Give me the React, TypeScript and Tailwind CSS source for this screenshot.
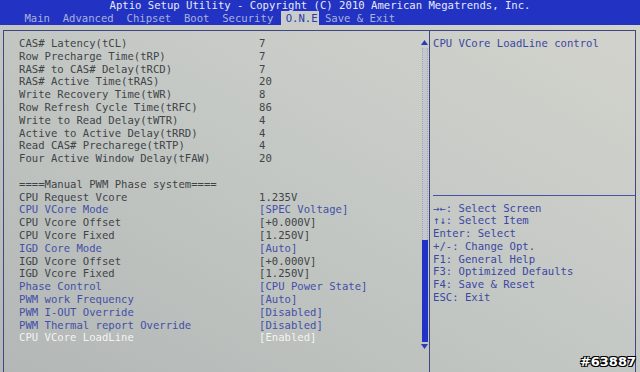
import React from "react"

type Row = { label: string; value?: string; kind?: "plain" | "link" | "active" }

const timings: Row[] = [
    { label: "CAS# Latency(tCL)", value: "7" },
    { label: "Row Precharge Time(tRP)", value: "7" },
    { label: "RAS# to CAS# Delay(tRCD)", value: "7" },
    { label: "RAS# Active Time(tRAS)", value: "20" },
    { label: "Write Recovery Time(tWR)", value: "8" },
    { label: "Row Refresh Cycle Time(tRFC)", value: "86" },
    { label: "Write to Read Delay(tWTR)", value: "4" },
    { label: "Active to Active Delay(tRRD)", value: "4" },
    { label: "Read CAS# Precharege(tRTP)", value: "4" },
    { label: "Four Active Window Delay(tFAW)", value: "20" },
]

const pwm: Row[] = [
    { label: "====Manual PWM Phase system====" },
    { label: "CPU Request Vcore", value: "1.235V" },
    { label: "CPU VCore Mode", value: "[SPEC Voltage]", kind: "link" },
    { label: "CPU Vcore Offset", value: "[+0.000V]" },
    { label: "CPU Vcore Fixed", value: "[1.250V]" },
    { label: "IGD Core Mode", value: "[Auto]", kind: "link" },
    { label: "IGD Vcore Offset", value: "[+0.000V]" },
    { label: "IGD Vcore Fixed", value: "[1.250V]" },
    { label: "Phase Control", value: "[CPU Power State]", kind: "link" },
    { label: "PWM work Frequency", value: "[Auto]", kind: "link" },
    { label: "PWM I-OUT Override", value: "[Disabled]", kind: "link" },
    { label: "PWM Thermal report Override", value: "[Disabled]", kind: "link" },
    { label: "CPU VCore LoadLine", value: "[Enabled]", kind: "active" },
]

const keys = [
    "→←: Select Screen",
    "↑↓: Select Item",
    "Enter: Select",
    "+/-: Change Opt.",
    "F1: General Help",
    "F3: Optimized Defaults",
    "F4: Save & Reset",
    "ESC: Exit",
]

const tabs = ["Main", "Advanced", "Chipset", "Boot", "Security", "O.N.E", "Save & Exit"]

function SetupRow({ row }: { row: Row }) {
    const color =
        row.kind === "link" ? "text-[#4350a8]" : row.kind === "active" ? "text-[#f2f4f4]" : "text-[#404447]"
    return (
        <div className={`flex h-[12.8px] leading-[12.8px] whitespace-pre ${color}`}>
            <span className="w-[240px] shrink-0">{row.label}</span>
            {row.value && <span>{row.value}</span>}
        </div>
    )
}

export default function App() {
    return (
        <div className="relative w-[640px] h-[372px] overflow-hidden bg-linear-to-tr from-[#b3b7b5] via-[#c4c8c5] to-[#d3d4cc] font-['DejaVu_Sans_Mono',monospace] text-[10.6px]">
            {/* top bar */}
            <div className="h-[25px] bg-[#2232c2]">
                <div className="h-[11px] leading-[11px] text-center text-[#e6eaf8] whitespace-pre">
                    Aptio Setup Utility - Copyright (C) 2010 American Megatrends, Inc.
                </div>
                <div className="flex pl-[18px] h-[14px] leading-[14px] whitespace-pre">
                    {tabs.map((t) =>
                        t === "O.N.E" ? (
                            <span key={t} className="ml-[1px] pl-[5px] pr-[1px] bg-[#c8ccca] text-[#2a3aa8]">
                                {t}
                            </span>
                        ) : (
                            <span key={t} className="px-[6.4px] text-[#a9b3dc]">
                                {t}
                            </span>
                        )
                    )}
                </div>
            </div>

            {/* main frame */}
            <div className="mt-[5px] ml-[3px] w-[633px] h-[345px] border border-[#3f4682] flex">
                <div className="flex-1 flex">
                    <div className="flex-1 pl-[15px] pt-[6px]">
                        {timings.map((r) => (
                            <SetupRow key={r.label} row={r} />
                        ))}
                        <div className="h-[12.8px]" />
                        {pwm.map((r) => (
                            <SetupRow key={r.label} row={r} />
                        ))}
                    </div>
                    {/* scrollbar */}
                    <div className="w-[7px] mr-[1px] flex flex-col items-center pt-[9px]">
                        <svg width="7" height="5" viewBox="0 0 7 5" className="text-[#2a3ab8]">
                            <path d="M3.5 0L7 5H0z" fill="currentColor" />
                        </svg>
                        <div className="mt-[3px] w-[6px] h-[192px] bg-[#c3c6cb] border-x border-dotted border-[#a3a7b4]" />
                        <div className="w-[6px] h-[102px] bg-[#2232c4]" />
                        <svg width="7" height="5" viewBox="0 0 7 5" className="mt-[2px] text-[#2a3ab8]">
                            <path d="M0 0H7L3.5 5z" fill="currentColor" />
                        </svg>
                    </div>
                </div>

                {/* help panel */}
                <div className="w-[206px] border-l border-[#3f4682] text-[#3b47a2] pt-[6px]">
                    <div className="pl-[3px] h-[12.8px] leading-[12.8px] whitespace-pre">CPU VCore LoadLine control</div>
                    <div className="mt-[145px] ml-[3px] border-t border-[#4a52a0]" />
                    <div className="pl-[3px] pt-[6px]">
                        {keys.map((k) => (
                            <div key={k} className="h-[12.7px] leading-[12.7px] whitespace-pre">
                                {k}
                            </div>
                        ))}
                    </div>
                </div>
            </div>

            <div className="absolute right-[4px] bottom-[3px] font-['DejaVu_Sans',sans-serif] font-bold text-[13px] leading-[14px] text-white [text-shadow:0_0_1px_#000,1px_1px_0_#000,-1px_-1px_0_#000,1px_-1px_0_#000,-1px_1px_0_#000]">
                #63887
            </div>
        </div>
    )
}
